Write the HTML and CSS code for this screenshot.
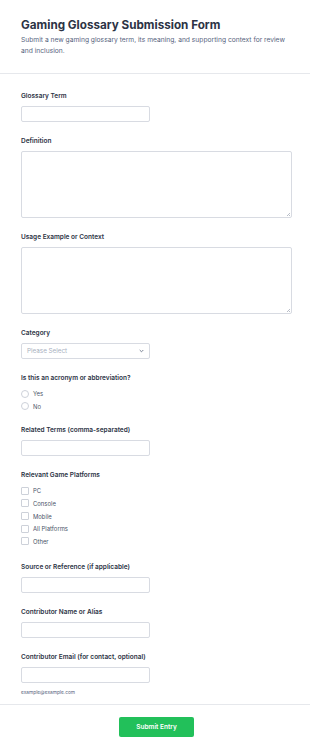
FILE: index.html
```html
<!DOCTYPE html>
<html lang="en">
<head>
    <meta charset="UTF-8">
    <meta name="viewport" content="width=device-width, initial-scale=1.0">
    <title>Gaming Glossary Submission Form</title>
    <link rel="stylesheet" href="styles.css">
</head>
<body>
    <div class="form-header">
        <h1>Gaming Glossary Submission Form</h1>
        <p class="subtitle">Submit a new gaming glossary term, its meaning, and supporting context for review and inclusion.</p>
    </div>

    <form class="form-body">
        <div class="field">
            <label class="field-label">Glossary Term</label>
            <input type="text" class="text-input">
        </div>

        <div class="field">
            <label class="field-label">Definition</label>
            <div class="area-wrap"><textarea class="text-area"></textarea></div>
        </div>

        <div class="field">
            <label class="field-label">Usage Example or Context</label>
            <div class="area-wrap"><textarea class="text-area"></textarea></div>
        </div>

        <div class="field">
            <label class="field-label">Category</label>
            <div class="select-box">
                <span>Please Select</span>
                <svg width="5" height="4" viewBox="0 0 5 4"><path d="M0.7 1 L2.5 2.8 L4.3 1" fill="none" stroke="#6b7588" stroke-width="0.9"/></svg>
            </div>
        </div>

        <div class="field options">
            <label class="field-label">Is this an acronym or abbreviation?</label>
            <div class="option-list">
                <div class="option"><span class="radio"></span>Yes</div>
                <div class="option"><span class="radio"></span>No</div>
            </div>
        </div>

        <div class="field">
            <label class="field-label">Related Terms (comma-separated)</label>
            <input type="text" class="text-input">
        </div>

        <div class="field options checks">
            <label class="field-label">Relevant Game Platforms</label>
            <div class="option-list">
                <div class="option"><span class="check"></span>PC</div>
                <div class="option"><span class="check"></span>Console</div>
                <div class="option"><span class="check"></span>Mobile</div>
                <div class="option"><span class="check"></span>All Platforms</div>
                <div class="option"><span class="check"></span>Other</div>
            </div>
        </div>

        <div class="field">
            <label class="field-label">Source or Reference (if applicable)</label>
            <input type="text" class="text-input">
        </div>

        <div class="field">
            <label class="field-label">Contributor Name or Alias</label>
            <input type="text" class="text-input">
        </div>

        <div class="field last">
            <label class="field-label">Contributor Email (for contact, optional)</label>
            <input type="text" class="text-input">
            <p class="helper">example@example.com</p>
        </div>
    </form>

    <div class="form-footer">
        <button class="submit-button">Submit Entry</button>
    </div>
</body>
</html>
```

FILE: styles.css
```css
body {
    margin: 0;
    background-color: #fff;
    font-family: Inter, "Noto Sans", Arial, sans-serif;
    color: #2c3345;
}
.form-header {
    padding: 17.5px 18px 16.5px 21px;
    border-bottom: 1px solid #e6e8ec;
}
h1 {
    margin: 0;
    font-size: 11.7px;
    line-height: 15px;
    font-weight: 700;
    color: #2c3345;
}
.subtitle {
    margin: 2.5px 0 0;
    font-size: 6.7px;
    line-height: 10.7px;
    color: #57647e;
}
.form-body {
    padding: 17.5px 18px 8px 21px;
}
.field {
    margin-bottom: 14px;
}
.field.options {
    margin-bottom: 12.6px;
}
.field.checks {
    margin-bottom: 14.5px;
}
.field.last {
    margin-bottom: 0;
}
.field-label {
    display: block;
    font-size: 6.5px;
    line-height: 11px;
    font-weight: 600;
    color: #2c3345;
    margin-bottom: 4px;
}
.text-input {
    display: block;
    box-sizing: border-box;
    width: 129px;
    height: 16px;
    margin: 0;
    border: 1px solid #d8dbe2;
    border-radius: 2px;
    background: #fff;
}
.area-wrap {
    position: relative;
}
.area-wrap::after {
    content: "";
    position: absolute;
    right: 2px;
    bottom: 2px;
    width: 3px;
    height: 3px;
    background: linear-gradient(135deg, transparent 45%, #b9bec8 45%, #b9bec8 60%, transparent 60%, transparent 75%, #b9bec8 75%);
}
.text-area {
    display: block;
    box-sizing: border-box;
    width: 100%;
    height: 67px;
    margin: 0;
    border: 1px solid #d8dbe2;
    border-radius: 2px;
    resize: none;
}
.select-box {
    box-sizing: border-box;
    width: 129px;
    height: 16px;
    padding: 0 5px;
    border: 1px solid #d8dbe2;
    border-radius: 2px;
    display: flex;
    align-items: center;
    justify-content: space-between;
    font-size: 6.3px;
    color: #a8b0c0;
}
.option-list {
    margin-top: -1px;
}
.option {
    display: flex;
    align-items: center;
    height: 12.7px;
    font-size: 5.9px;
    color: #4a5468;
}
.radio,
.check {
    box-sizing: border-box;
    width: 8px;
    height: 8px;
    margin-right: 4px;
    border: 1px solid #cdd1d9;
    background: #fff;
}
.radio {
    border-radius: 50%;
}
.check {
    border-radius: 1px;
}
.helper {
    margin: 4.4px 0 0;
    font-size: 4.8px;
    line-height: 8px;
    color: #57647e;
}
.form-footer {
    border-top: 1px solid #e6e8ec;
    padding: 12.5px 18px 16px 21px;
    display: flex;
    justify-content: center;
}
.submit-button {
    width: 75px;
    height: 20px;
    border: none;
    border-radius: 2px;
    background-color: #22c05a;
    color: #fff;
    font-family: Inter, "Noto Sans", Arial, sans-serif;
    font-size: 6.5px;
    font-weight: 600;
    cursor: pointer;
}
```
